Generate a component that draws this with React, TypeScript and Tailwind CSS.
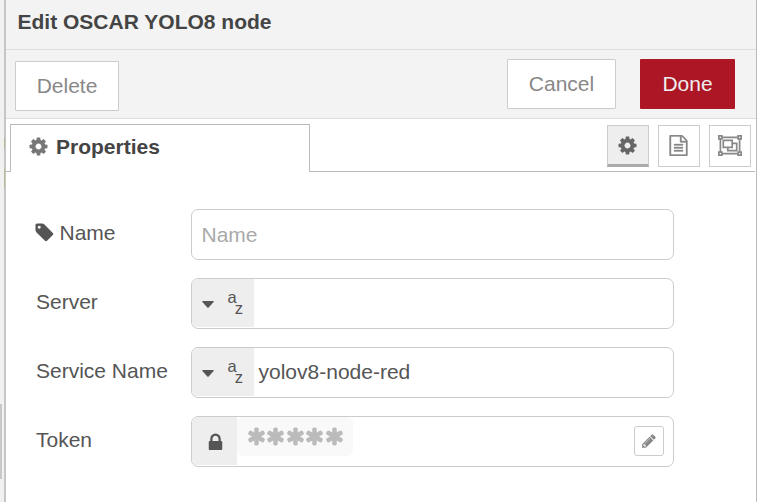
import React from "react";

const COG =
  "M1152 896q0-106-75-181t-181-75-181 75-75 181 75 181 181 75 181-75 75-181zm512-109v222q0 12-8 23t-20 13l-185 28q-19 54-39 91 35 50 107 138 10 12 10 25t-9 23q-27 37-99 108t-94 71q-12 0-26-9l-138-108q-44 23-91 38-16 136-29 186-7 28-36 28h-222q-14 0-24.5-8.5t-11.5-21.5l-28-184q-49-16-90-37l-141 107q-10 9-25 9-14 0-25-11-126-114-165-168-7-10-7-23 0-12 8-23 15-21 51-66.5t54-70.5q-27-50-41-99l-183-27q-13-2-21-12.5t-8-23.5v-222q0-12 8-23t19-13l186-28q14-46 39-92-40-57-107-138-10-12-10-24 0-10 9-23 26-36 98.5-107.5t94.5-71.5q13 0 26 10l138 107q44-23 91-38 16-136 29-186 7-28 36-28h222q14 0 24.5 8.5t11.5 21.5l28 184q49 16 90 37l142-107q9-9 24-9 13 0 25 10 129 119 165 170 7 8 7 22 0 12-8 23-15 21-51 66.5t-54 70.5q26 50 41 98l183 28q13 2 21 12.5t8 23.5z";
const TAG =
  "M576 448q0-53-37.5-90.5t-90.5-37.5-90.5 37.5-37.5 90.5 37.5 90.5 90.5 37.5 90.5-37.5 37.5-90.5zm1067 576q0 53-37 90l-491 492q-39 37-91 37-53 0-90-37l-715-716q-38-37-64.5-101t-26.5-117v-416q0-52 38-90t90-38h416q53 0 117 26.5t102 64.5l715 714q37 39 37 91z";
const LOCK =
  "M640 768h512v-192q0-106-75-181t-181-75-181 75-75 181v192zm832 96v576q0 40-28 68t-68 28h-960q-40 0-68-28t-28-68v-576q0-40 28-68t68-28h32v-192q0-184 132-316t316-132 316 132 132 316v192h32q40 0 68 28t28 68z";
const FILE =
  "M1596 380q28 28 48 76t20 88v1152q0 40-28 68t-68 28h-1344q-40 0-68-28t-28-68v-1600q0-40 28-68t68-28h896q40 0 88 20t76 48zm-444-244v376h376q-10-29-22-41l-313-313q-12-12-41-22zm384 1528v-1024h-416q-40 0-68-28t-28-68v-416h-768v1536h1280zm-1024-864q0-14 9-23t23-9h704q14 0 23 9t9 23v64q0 14-9 23t-23 9h-704q-14 0-23-9t-9-23v-64zm736 224q14 0 23 9t9 23v64q0 14-9 23t-23 9h-704q-14 0-23-9t-9-23v-64q0-14 9-23t23-9h704zm0 256q14 0 23 9t9 23v64q0 14-9 23t-23 9h-704q-14 0-23-9t-9-23v-64q0-14 9-23t23-9h704z";
const ASTERISK =
  "M1546 1050q46 26 59.5 77.5t-12.5 97.5l-64 110q-26 46-77.5 59.5t-97.5-12.5l-266-153v307q0 52-38 90t-90 38h-128q-52 0-90-38t-38-90v-307l-266 153q-46 26-97.5 12.5t-77.5-59.5l-64-110q-26-46-12.5-97.5t59.5-77.5l266-154-266-154q-46-26-59.5-77.5t12.5-97.5l64-110q26-46 77.5-59.5t97.5 12.5l266 153v-307q0-52 38-90t90-38h128q52 0 90 38t38 90v307l266-153q46-26 97.5-12.5t77.5 59.5l64 110q26 46 12.5 97.5t-59.5 77.5l-266 154z";
const PENCIL =
  "M491 1536l91-91-235-235-91 91v107h128v128h107zm523-928q0-22-22-22-10 0-17 7l-542 542q-7 7-7 17 0 22 22 22 10 0 17-7l542-542q7-7 7-17zm-54-192l416 416-832 832h-416v-416zm683 96q0 53-37 90l-166 166-416-416 166-165q36-38 90-38 53 0 91 38l235 234q37 39 37 91z";

function Icon({ d, className }: { d: string; className: string }) {
  return (
    <svg viewBox="0 0 1792 1792" fill="currentColor" className={`shrink-0 ${className}`}>
      <path d={d} />
    </svg>
  );
}

function GroupIcon() {
  return (
    <svg viewBox="0 0 24 21" fill="none" stroke="currentColor" strokeWidth="1.7" className="-mt-px h-[21px] w-6">
      <path d="M4 2.4h16M4 18.6h16M2.4 4v13M21.6 4v13" />
      <path d="M.8.8h3.1v3.1H.8zM20.1.8h3.1v3.1h-3.1zM.8 17.1h3.1v3.1H.8zM20.1 17.1h3.1v3.1h-3.1z" />
      <path d="M5.3 5.4h8.9v7H5.3zM14.2 8.3h4.5v7.3H9.8v-3.2" />
    </svg>
  );
}

function Row({ label, children }: { label: React.ReactNode; children: React.ReactNode }) {
  return (
    <div className="flex h-[51px]">
      <div className="flex h-12 w-[155px] shrink-0 items-center whitespace-nowrap text-[21px] text-[#555]">{label}</div>
      <div className="flex w-[483px] overflow-hidden rounded-[7px] border border-[#ccc] bg-white">{children}</div>
    </div>
  );
}

function TypeSelector() {
  return (
    <div className="flex h-12 w-[62px] shrink-0 bg-[#eee] pl-[9.5px] text-[#555]">
      <svg viewBox="0 0 12 7" fill="currentColor" className="mt-[21.5px] h-[7px] w-3">
        <path d="M.8 0h10.4q1 .2.4 1L6.7 6.4q-.7.7-1.4 0L.4 1Q-.2.2.8 0z" />
      </svg>
      <div className="ml-[14px] flex text-[16.5px] leading-[18px]">
        <span className="mt-[9px]">a</span>
        <span className="-ml-[2px] mt-5">z</span>
      </div>
    </div>
  );
}

export default function App() {
  return (
    <div className="flex h-[502px] w-[757px] overflow-hidden bg-white font-['Liberation_Sans',Arial,sans-serif]">
      <div className="flex w-1 shrink-0 flex-col justify-end bg-[#f1f1f1]">
        <div className="mb-[23px] h-[75px] w-[2px] bg-[#c8c8c8]" />
      </div>
      <div className="flex w-[2px] shrink-0 flex-col bg-[#c6c6c6] pt-[138px]">
        <div className="h-[11px] w-px bg-[#b9b894]" />
        <div className="mt-5 h-[18px] w-px bg-[#b9b894]" />
      </div>
      <div className="flex w-[751px] flex-col border-r border-[#bbb]">
        <div className="h-[50px] shrink-0 border-b border-[#ddd] bg-[#f3f3f3] pl-[11.5px] pt-[10px] text-[21px] font-bold leading-6 text-[#444]">
          Edit OSCAR YOLO8 node
        </div>
        <div className="flex h-[69px] shrink-0 items-start border-b border-[#ddd] bg-[#f3f3f3] pl-[9px] pr-[21px] text-[21px] text-[#888]">
          <button className="mt-[11px] h-[50px] w-[104px] rounded-[1px] border border-[#ccc] bg-white">Delete</button>
          <button className="ml-auto mt-[9px] h-[50px] w-[109px] rounded-[1px] border border-[#ccc] bg-white">Cancel</button>
          <button className="ml-6 mt-[9px] h-[50px] w-[95px] rounded-[1px] bg-[#ad1625] text-[#eee]">Done</button>
        </div>
        <div className="mr-px flex h-[53px] shrink-0 items-end">
          <div className="h-px w-1 bg-[#bbb]" />
          <div className="flex h-12 w-[300px] items-center border border-b-0 border-[#bbb] pb-[4px] pl-[17px] text-[21px] font-bold text-[#444]">
            <Icon d={COG} className="mr-[7px] h-[21px] w-[21px] text-[#777]" />
            Properties
          </div>
          <div className="flex h-full flex-1 justify-end gap-[9px] border-b border-[#bbb] pr-1 pt-[6px] text-[#888]">
            <div className="flex h-[42px] w-[42px] items-center justify-center border border-b-[3px] border-[#ccc] border-b-[#aaa] bg-[#eee] pr-px text-[#666]">
              <Icon d={COG} className="h-[21px] w-[21px]" />
            </div>
            <div className="flex h-[42px] w-[42px] items-center justify-center border border-[#ccc] pr-px">
              <Icon d={FILE} className="-mt-px h-[21px] w-[21px] stroke-current stroke-[30]" />
            </div>
            <div className="flex h-[42px] w-[42px] items-center justify-center border border-[#ccc]">
              <GroupIcon />
            </div>
          </div>
        </div>
        <div className="flex flex-col gap-[18px] pl-[30px] pt-[37px]">
          <Row
            label={
              <>
                <Icon d={TAG} className="-ml-[2px] -mt-[2px] mr-[4.5px] h-[21px] w-[21px]" />
                Name
              </>
            }
          >
            <span className="pl-[9.5px] text-[21px] leading-[50px] text-[#aaa]">Name</span>
          </Row>
          <Row label="Server">
            <TypeSelector />
          </Row>
          <Row label="Service Name">
            <TypeSelector />
            <span className="pl-[4.5px] text-[21px] leading-[48px] text-[#555]">yolov8-node-red</span>
          </Row>
          <Row label="Token">
            <div className="flex h-12 w-[45px] shrink-0 items-center bg-[#eee] pl-[13px] pt-[2px] text-[#555]">
              <Icon d={LOCK} className="h-[21px] w-[21px]" />
            </div>
            <div className="flex h-[39px] w-[116px] items-center rounded-md bg-[#f9f9f9] pl-[8.5px] text-[#bbb]">
              {[0, 1, 2, 3, 4].map((n) => (
                <Icon key={n} d={ASTERISK} className="-mr-[1.5px] h-[21px] w-[21px]" />
              ))}
            </div>
            <div className="ml-auto mr-[9px] mt-[9px] flex h-[30px] w-[30px] items-center justify-center rounded-[3px] border border-[#ccc] text-[#888]">
              <Icon d={PENCIL} className="h-4 w-4" />
            </div>
          </Row>
        </div>
      </div>
    </div>
  );
}
